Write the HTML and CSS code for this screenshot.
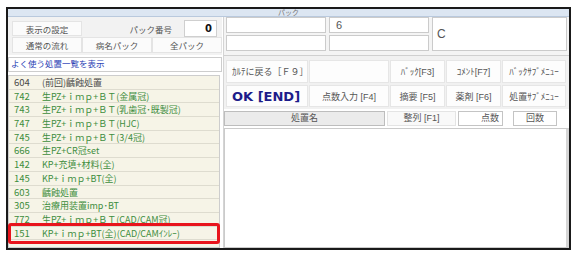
FILE: index.html
```html
<!DOCTYPE html>
<html lang="ja">
<head>
  <meta charset="UTF-8" />
  <title>パック</title>
  <link rel="stylesheet" href="styles.css">
</head>
<body>
  <div class="window">
    <div class="caption">パック</div>
    <div class="panes">

      <div class="left">
        <div class="pack-head">
          <div class="pack-row">
            <div class="cell cell-set">表示の設定</div>
            <span class="pack-label">パック番号</span>
            <div class="pack-no">0</div>
          </div>
          <div class="pack-tabs">
            <div class="cell">通常の流れ</div>
            <div class="cell">病名パック</div>
            <div class="cell">全パック</div>
          </div>
        </div>

        <div class="freq-title">よく使う処置一覧を表示</div>

        <ul class="freq-list">
          <li class="prev"><span class="code">604</span>(前回)齲蝕処置</li>
          <li><span class="code">742</span>生PZ+ｉｍｐ+ＢＴ(金属冠)</li>
          <li><span class="code">743</span>生PZ+ｉｍｐ+ＢＴ(乳歯冠･既製冠)</li>
          <li><span class="code">747</span>生PZ+ｉｍｐ+ＢＴ(HJC)</li>
          <li><span class="code">745</span>生PZ+ｉｍｐ+ＢＴ(3/4冠)</li>
          <li><span class="code">666</span>生PZ+CR冠set</li>
          <li><span class="code">142</span>KP+充填+材料(全)</li>
          <li><span class="code">145</span>KP+ｉｍｐ+BT(全)</li>
          <li><span class="code">603</span>齲蝕処置</li>
          <li><span class="code">305</span>治療用装置imp･BT</li>
          <li><span class="code">772</span>生PZ+ｉｍｐ+ＢＴ(CAD/CAM冠)</li>
          <li><span class="code">151</span>KP+ｉｍｐ+BT(全)(CAD/CAMｲﾝﾚｰ)</li>
        </ul>

        <div class="highlight"></div>
      </div>

      <div class="right">
        <div class="fields">
          <div class="field"></div>
          <div class="field">6</div>
          <div class="field field-big">C</div>
          <div class="field"></div>
          <div class="field"></div>
        </div>

        <div class="buttons">
          <div class="btn btn-left">ｶﾙﾃに戻る［Ｆ９］</div>
          <div class="btn"></div>
          <div class="btn">ﾊﾞｯｸ[F3]</div>
          <div class="btn">ｺﾒﾝﾄ[F7]</div>
          <div class="btn">ﾊﾞｯｸｻﾌﾞﾒﾆｭｰ</div>
          <div class="btn btn-left btn-ok">OK [END]</div>
          <div class="btn">点数入力 [F4]</div>
          <div class="btn">摘要 [F5]</div>
          <div class="btn">薬剤 [F6]</div>
          <div class="btn">処置ｻﾌﾞﾒﾆｭｰ</div>
        </div>

        <div class="col-head">
          <div class="col col-name">処置名</div>
          <div class="col col-sort">整列 [F1]</div>
          <div class="col col-point">点数</div>
          <div class="col col-count">回数</div>
        </div>

        <div class="detail"></div>
      </div>

    </div>
  </div>
</body>
</html>
```

FILE: styles.css
```css
body {
  margin: 0;
  background: #ffffff;
  font-family: "Liberation Sans", "Noto Sans CJK JP", sans-serif;
  font-size: 9px;
  color: #444;
}
.window {
  box-sizing: border-box;
  width: 565px;
  height: 243px;
  margin: 7px 0 0 6px;
  border: 2px solid #1a1a1a;
  display: flex;
  flex-direction: column;
}
.caption {
  height: 7px;
  background: #dce6f2;
  border-bottom: 1px solid #b9c9dd;
  text-align: center;
  font-size: 7px;
  line-height: 7px;
  color: #777;
  overflow: hidden;
}
.panes {
  flex: 1;
  display: flex;
  gap: 1px;
}

/* left side */
.left {
  position: relative;
  width: 214px;
  display: flex;
  flex-direction: column;
}
.pack-head {
  height: 38px;
  background: #f2f2f2;
  box-sizing: border-box;
  padding-top: 3px;
}
.pack-row {
  display: flex;
  align-items: center;
  height: 17px;
  padding-left: 4px;
}
.cell {
  box-sizing: border-box;
  background: #fbfbfb;
  border: 1px solid #e4e4e4;
  display: flex;
  align-items: center;
  justify-content: center;
  color: #555;
  font-size: 8.5px;
}
.cell-set {
  width: 70px;
  height: 15px;
}
.pack-label {
  margin-left: 44px;
  width: 46px;
  text-align: right;
  white-space: nowrap;
  font-size: 8.5px;
  color: #555;
}
.pack-no {
  box-sizing: border-box;
  width: 33px;
  height: 17px;
  margin-left: 12px;
  background: #fff;
  border: 1px solid #cfcfcf;
  text-align: right;
  padding-right: 4px;
  font-family: "DejaVu Sans", sans-serif;
  font-weight: bold;
  font-size: 10px;
  line-height: 15px;
  color: #111;
}
.pack-tabs {
  display: flex;
  height: 16px;
  padding-left: 4px;
}
.pack-tabs .cell {
  width: 70px;
}
.freq-title {
  box-sizing: border-box;
  height: 15px;
  margin-top: 2px;
  background: #fff;
  border: 1px solid #cdcdcd;
  padding-left: 2px;
  line-height: 13px;
  color: #2b3fb5;
  font-size: 8.5px;
}
.freq-list {
  flex: 1;
  margin: 3px 2px 0 0;
  padding: 0;
  list-style: none;
  background: #f6f4e7;
  border: 1px solid #cdcdcd;
  overflow: hidden;
}
.freq-list li {
  box-sizing: border-box;
  height: 13.7px;
  line-height: 13px;
  padding-left: 5px;
  border-bottom: 1px solid #dedccf;
  color: #3d8d3d;
  font-family: "Noto Sans CJK JP", sans-serif;
  font-size: 9px;
  white-space: nowrap;
}
.freq-list li.prev {
  color: #4a4a4a;
}
.code {
  display: inline-block;
  width: 28px;
  font-size: 9.5px;
}
.highlight {
  position: absolute;
  left: 0;
  top: 206px;
  width: 212px;
  height: 21px;
  box-sizing: border-box;
  border: 3px solid #e8141c;
  border-radius: 3px;
}

/* right side */
.right {
  flex: 1;
  display: flex;
  flex-direction: column;
  border-left: 1px solid #d4d4d4;
}
.fields {
  height: 38px;
  box-sizing: border-box;
  display: grid;
  grid-template-columns: 100px 100px 135px;
  grid-template-rows: 16px 16px;
  gap: 2px 3px;
  padding-left: 2px;
  background: #f4f4f4;
}
.field {
  box-sizing: border-box;
  background: #fff;
  border: 1px solid #cbcbcb;
  padding-left: 6px;
  font-size: 11px;
  line-height: 14px;
  color: #555;
}
.field-big {
  grid-column: 3;
  grid-row: 1 / 3;
  display: flex;
  align-items: center;
  padding-left: 4px;
  font-size: 12px;
}
.buttons {
  box-sizing: border-box;
  height: 54px;
  border-top: 1px solid #d0d0d0;
  padding: 4px 0 2px 2px;
  display: grid;
  grid-template-columns: 82px 80px 55px 55px 64px;
  grid-template-rows: 23px 22px;
  gap: 2px 1px;
  background: #f1f1f1;
}
.btn {
  background: #fdfdfd;
  border: 1px solid #e6e6e6;
  display: flex;
  align-items: center;
  justify-content: center;
  color: #555;
  white-space: nowrap;
}
.btn-left {
  justify-content: flex-start;
  padding-left: 5px;
}
.btn-ok {
  font-family: "DejaVu Sans", sans-serif;
  font-weight: bold;
  font-size: 13px;
  color: #1c1c8a;
}
.col-head {
  display: flex;
  height: 15px;
  margin-top: 2px;
  gap: 2px;
}
.col {
  box-sizing: border-box;
  border: 1px solid #c4c4c4;
  background: #fff;
  line-height: 13px;
  text-align: center;
  color: #555;
}
.col-name {
  width: 161px;
  background: #ebebeb;
  border-color: #bdbdbd;
}
.col-sort {
  width: 69px;
  background: #f9f9f9;
  border-color: #e4e4e4;
}
.col-point {
  width: 45px;
  text-align: right;
  padding-right: 3px;
}
.col-count {
  width: 44px;
  margin-left: 8px;
}
.detail {
  flex: 1;
  margin-top: 2px;
  background: #fff;
  border: 1px solid #cbcbcb;
  border-right: 3px solid #d6d6d6;
}
```
